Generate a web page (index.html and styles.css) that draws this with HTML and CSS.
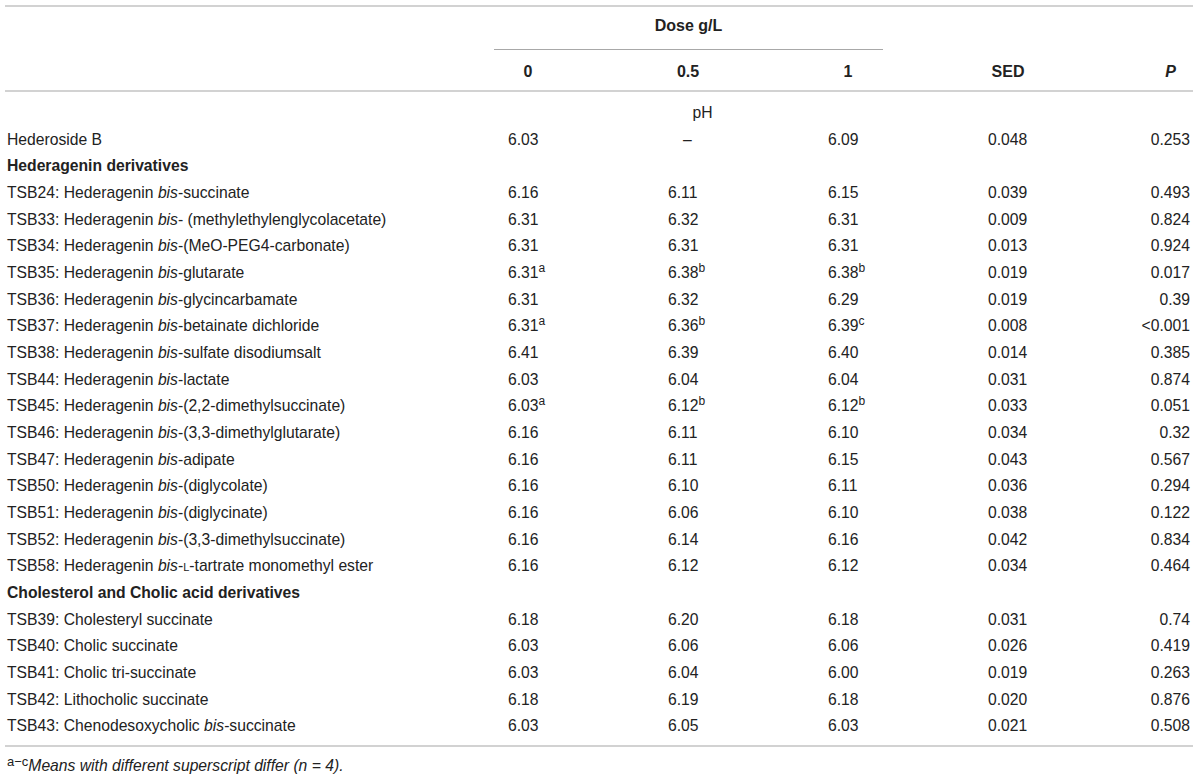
FILE: index.html
```html
<!DOCTYPE html>
<html lang="en">
<head>
<meta charset="utf-8">
<title>Table</title>
<link rel="stylesheet" href="styles.css">
</head>
<body>
<table class="data">
  <colgroup>
    <col class="c-name"><col class="c-num"><col class="c-num"><col class="c-num"><col class="c-num"><col class="c-p">
  </colgroup>
  <thead>
    <tr class="r-dose">
      <th></th>
      <th colspan="3"><div class="dose">Dose g/L</div></th>
      <th></th>
      <th></th>
    </tr>
    <tr class="r-head">
      <th></th>
      <th><span class="hc">0</span></th>
      <th><span class="hc">0.5</span></th>
      <th><span class="hc">1</span></th>
      <th><span class="hc">SED</span></th>
      <th class="hp"><i>P</i></th>
    </tr>
  </thead>
  <tbody>
    <tr class="r-ph">
      <td></td>
      <td colspan="3"><div class="ph">pH</div></td>
      <td></td>
      <td></td>
    </tr>
    <tr><td>Hederoside B</td><td>6.03</td><td><span class="dash">–</span></td><td>6.09</td><td>0.048</td><td class="p">0.253</td></tr>
    <tr><td class="grp" colspan="6">Hederagenin derivatives</td></tr>
    <tr><td>TSB24: Hederagenin <i>bis</i>-succinate</td><td>6.16</td><td>6.11</td><td>6.15</td><td>0.039</td><td class="p">0.493</td></tr>
    <tr><td>TSB33: Hederagenin <i>bis</i>- (methylethylenglycolacetate)</td><td>6.31</td><td>6.32</td><td>6.31</td><td>0.009</td><td class="p">0.824</td></tr>
    <tr><td>TSB34: Hederagenin <i>bis</i>-(MeO-PEG4-carbonate)</td><td>6.31</td><td>6.31</td><td>6.31</td><td>0.013</td><td class="p">0.924</td></tr>
    <tr><td>TSB35: Hederagenin <i>bis</i>-glutarate</td><td>6.31<sup>a</sup></td><td>6.38<sup>b</sup></td><td>6.38<sup>b</sup></td><td>0.019</td><td class="p">0.017</td></tr>
    <tr><td>TSB36: Hederagenin <i>bis</i>-glycincarbamate</td><td>6.31</td><td>6.32</td><td>6.29</td><td>0.019</td><td class="p">0.39</td></tr>
    <tr><td>TSB37: Hederagenin <i>bis</i>-betainate dichloride</td><td>6.31<sup>a</sup></td><td>6.36<sup>b</sup></td><td>6.39<sup>c</sup></td><td>0.008</td><td class="p">&lt;0.001</td></tr>
    <tr><td>TSB38: Hederagenin <i>bis</i>-sulfate disodiumsalt</td><td>6.41</td><td>6.39</td><td>6.40</td><td>0.014</td><td class="p">0.385</td></tr>
    <tr><td>TSB44: Hederagenin <i>bis</i>-lactate</td><td>6.03</td><td>6.04</td><td>6.04</td><td>0.031</td><td class="p">0.874</td></tr>
    <tr><td>TSB45: Hederagenin <i>bis</i>-(2,2-dimethylsuccinate)</td><td>6.03<sup>a</sup></td><td>6.12<sup>b</sup></td><td>6.12<sup>b</sup></td><td>0.033</td><td class="p">0.051</td></tr>
    <tr><td>TSB46: Hederagenin <i>bis</i>-(3,3-dimethylglutarate)</td><td>6.16</td><td>6.11</td><td>6.10</td><td>0.034</td><td class="p">0.32</td></tr>
    <tr><td>TSB47: Hederagenin <i>bis</i>-adipate</td><td>6.16</td><td>6.11</td><td>6.15</td><td>0.043</td><td class="p">0.567</td></tr>
    <tr><td>TSB50: Hederagenin <i>bis</i>-(diglycolate)</td><td>6.16</td><td>6.10</td><td>6.11</td><td>0.036</td><td class="p">0.294</td></tr>
    <tr><td>TSB51: Hederagenin <i>bis</i>-(diglycinate)</td><td>6.16</td><td>6.06</td><td>6.10</td><td>0.038</td><td class="p">0.122</td></tr>
    <tr><td>TSB52: Hederagenin <i>bis</i>-(3,3-dimethylsuccinate)</td><td>6.16</td><td>6.14</td><td>6.16</td><td>0.042</td><td class="p">0.834</td></tr>
    <tr><td>TSB58: Hederagenin <i>bis</i>-<span class="sc">l</span>-tartrate monomethyl ester</td><td>6.16</td><td>6.12</td><td>6.12</td><td>0.034</td><td class="p">0.464</td></tr>
    <tr><td class="grp" colspan="6">Cholesterol and Cholic acid derivatives</td></tr>
    <tr><td>TSB39: Cholesteryl succinate</td><td>6.18</td><td>6.20</td><td>6.18</td><td>0.031</td><td class="p">0.74</td></tr>
    <tr><td>TSB40: Cholic succinate</td><td>6.03</td><td>6.06</td><td>6.06</td><td>0.026</td><td class="p">0.419</td></tr>
    <tr><td>TSB41: Cholic tri-succinate</td><td>6.03</td><td>6.04</td><td>6.00</td><td>0.019</td><td class="p">0.263</td></tr>
    <tr><td>TSB42: Lithocholic succinate</td><td>6.18</td><td>6.19</td><td>6.18</td><td>0.020</td><td class="p">0.876</td></tr>
    <tr class="r-last"><td>TSB43: Chenodesoxycholic <i>bis</i>-succinate</td><td>6.03</td><td>6.05</td><td>6.03</td><td>0.021</td><td class="p">0.508</td></tr>
  </tbody>
</table>
<p class="foot"><sup>a−c</sup><i>Means with different superscript differ (n = 4).</i></p>
</body>
</html>
```

FILE: styles.css
```css
html, body {
  margin: 0;
  padding: 0;
  background: #ffffff;
}

body {
  font-family: "Liberation Sans", Arial, Helvetica, sans-serif;
  font-size: 15.7px;
  color: #222222;
  padding: 5px 7px 0 5px;
}

.data {
  width: 1188px;
  border-collapse: collapse;
  table-layout: fixed;
  border-top: 2px solid #d2d2d2;
}

.c-name { width: 489px; }
.c-num { width: 160px; }
.c-p { width: 59px; }

.data th,
.data td {
  padding: 0;
  text-align: left;
  vertical-align: middle;
  white-space: nowrap;
}

.data th {
  font-weight: bold;
  font-size: 16px;
}

.r-dose th {
  padding-top: 10px;
  line-height: 18px;
}

.dose {
  width: 389px;
  text-align: center;
  border-bottom: 1px solid #a8a8a8;
  padding-bottom: 14px;
}

.r-head th {
  line-height: 18px;
  padding-top: 13px;
  padding-bottom: 9px;
  border-bottom: 2px solid #d2d2d2;
}

.r-head th:not(.hp) {
  padding-left: 14px;
}

.hc {
  display: inline-block;
  min-width: 40px;
  text-align: center;
}

.data th.hp {
  text-align: right;
  padding-right: 17px;
}

.data tbody td {
  line-height: 26.667px;
}

.data tbody tr.r-ph td {
  line-height: 18px;
  padding-top: 12px;
  padding-bottom: 4.67px;
}

.ph {
  width: 389px;
  text-align: center;
}

.data tbody td:first-child {
  padding-left: 2px;
}

.data tbody td + td {
  padding-left: 14px;
}

.data tbody td.p {
  text-align: right;
  padding-left: 0;
  padding-right: 3px;
}

.data tbody td.grp {
  font-weight: bold;
  padding-left: 2px;
}

.dash {
  display: inline-block;
  padding-left: 15px;
}

.sc {
  font-variant: small-caps;
}

sup {
  font-size: 12px;
  line-height: 0;
  vertical-align: 6px;
}

.data tbody tr.r-last td {
  padding-bottom: 5px;
  border-bottom: 2px solid #d2d2d2;
}

.foot {
  margin: 10px 0 0 2px;
  line-height: 18px;
}

.foot sup {
  font-size: 13px;
  vertical-align: 5px;
}
```
